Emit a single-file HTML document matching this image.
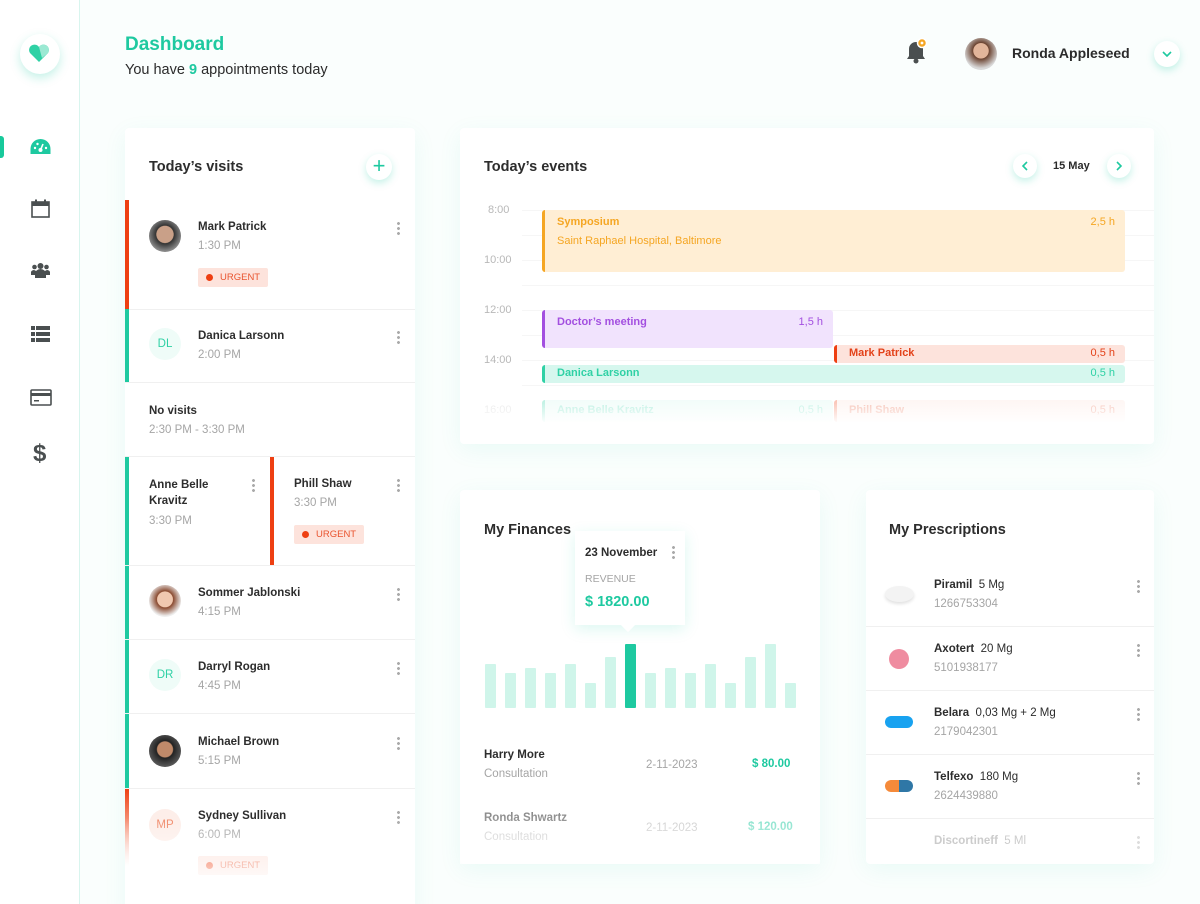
<!DOCTYPE html><html><head><meta charset="utf-8"><style>
*{margin:0;padding:0;box-sizing:border-box}
html,body{width:1200px;height:904px;overflow:hidden}
body{background:#fafefd;font-family:"Liberation Sans",sans-serif;color:#2b2b2b;position:relative}
.a{position:absolute}
.side{left:0;top:0;width:80px;height:904px;background:#fff;border-right:1px solid #d8f5ee}
.card{background:#fff;border-radius:4px;box-shadow:0 6px 24px rgba(20,200,160,.07)}
.t{font-size:14.5px;font-weight:bold;color:#2d2d2d}
.n{font-size:11.5px;font-weight:bold;color:#2d2d2d}
.s{font-size:11.5px;color:#a5a5a5}
.dots{width:3px;height:15px;background:radial-gradient(circle,#aaa 1.3px,transparent 1.6px) 0 0/3px 5px}
.urg{background:#fde3dc;color:#e9542f;font-size:9.5px;height:19px;line-height:19px;padding:0 8px 0 22px;border-radius:2px}
.urg:before{content:"";position:absolute;left:8px;top:6px;width:7px;height:7px;border-radius:50%;background:#ee3f12}
.av{width:32px;height:32px;border-radius:50%;font-size:11.5px;text-align:center;line-height:32px}
.line{height:1px;background:#f0f0f0}
.ev{border-radius:3px;font-size:11px;font-weight:bold;padding:6px 10px 0 12px}
.ev i{position:absolute;right:10px;top:6px;font-style:normal;font-weight:normal}
.hr{font-size:11px;color:#b8b8b8}
.bar{width:11px;background:#cff5ea;bottom:156px;border-radius:1px}
</style></head><body>
<div class="a side">
 <div class="a" style="left:20px;top:34px;width:40px;height:40px;border-radius:50%;background:#fff;box-shadow:0 4px 10px rgba(20,200,160,.25)"></div>
 <svg class="a" style="left:28px;top:43px" width="22" height="20" viewBox="0 0 22 20"><path d="M11 19L2 10A5 5 0 0 1 11 4A5 5 0 0 1 20 10Z" fill="#2fd1a5"/><path d="M11 4A5 5 0 0 1 20 10L14 15Z" fill="#9be9d3"/></svg>
 <div class="a" style="left:0;top:136px;width:4px;height:22px;background:#18c99b;border-radius:0 3px 3px 0"></div>
 <svg class="a" style="left:30px;top:138px" width="21" height="17" viewBox="0 0 21 17"><path d="M10.5 1A10 10 0 0 0 0.5 11V16H20.5V11A10 10 0 0 0 10.5 1Z" fill="#1ec9a0"/><circle cx="10.5" cy="12" r="2" fill="#fff"/><path d="M10.5 12L13 6" stroke="#fff" stroke-width="1.6"/><circle cx="5" cy="10" r="1.2" fill="#fff"/><circle cx="16" cy="10" r="1.2" fill="#fff"/><circle cx="7.5" cy="6" r="1.2" fill="#fff"/></svg>
 <svg class="a" style="left:31px;top:199px" width="19" height="19" viewBox="0 0 19 19"><rect x="1" y="3" width="17" height="15" fill="none" stroke="#4a4f50" stroke-width="1.6"/><rect x="1" y="3" width="17" height="4" fill="#4a4f50"/><rect x="4" y="0.5" width="2" height="4" fill="#4a4f50"/><rect x="13" y="0.5" width="2" height="4" fill="#4a4f50"/></svg>
 <svg class="a" style="left:31px;top:262px" width="19" height="17" viewBox="0 0 19 17"><circle cx="9.5" cy="4" r="3" fill="#4a4f50"/><circle cx="3.5" cy="5" r="2.3" fill="#4a4f50"/><circle cx="15.5" cy="5" r="2.3" fill="#4a4f50"/><path d="M4 16V12A5.5 5 0 0 1 15 12V16Z M0 13V10A3 3 0 0 1 5 9V13Z M14 9A3 3 0 0 1 19 10V13H14Z" fill="#4a4f50"/></svg>
 <svg class="a" style="left:31px;top:326px" width="19" height="16" viewBox="0 0 19 16"><g fill="#4a4f50"><rect x="0" y="0" width="4" height="4"/><rect x="5" y="0" width="14" height="4"/><rect x="0" y="6" width="4" height="4"/><rect x="5" y="6" width="14" height="4"/><rect x="0" y="12" width="4" height="4"/><rect x="5" y="12" width="14" height="4"/></g></svg>
 <svg class="a" style="left:30px;top:389px" width="22" height="17" viewBox="0 0 22 17"><rect x="1" y="1" width="20" height="15" rx="1" fill="none" stroke="#4a4f50" stroke-width="1.6"/><rect x="1" y="4" width="20" height="3" fill="#4a4f50"/><rect x="4" y="11" width="5" height="1.5" fill="#4a4f50"/></svg>
 <div class="a" style="left:33px;top:440px;font-size:24px;font-weight:bold;color:#4a4f50">$</div>
</div>

<div class="a" style="left:125px;top:34px;font-size:19px;font-weight:bold;color:#1ec9a0">Dashboard</div>
<div class="a" style="left:125px;top:62px;font-size:14.5px;color:#2b2b2b">You have <b style="color:#1ec9a0">9</b> appointments today</div>
<svg class="a" style="left:905px;top:37px" width="24" height="28" viewBox="0 0 24 28"><path d="M11 5A7 7 0 0 0 4 12V19L2 22H20L18 19V12A7 7 0 0 0 11 5Z" fill="#4a4f50"/><circle cx="11" cy="24" r="2.5" fill="#4a4f50"/><circle cx="17" cy="6" r="4.5" fill="#f5a623" stroke="#fff" stroke-width="1.5"/><circle cx="17" cy="6" r="1.4" fill="#fff"/></svg>
<div class="a" style="left:965px;top:38px;width:32px;height:32px;border-radius:50%;background:radial-gradient(circle at 50% 40%,#e2b59a 30%,#6b4330 32%,#d9d9d9 70%)"></div>
<div class="a" style="left:1012px;top:45px;font-size:14px;font-weight:bold">Ronda Appleseed</div>
<div class="a" style="left:1154px;top:41px;width:26px;height:26px;border-radius:50%;background:#fff;box-shadow:0 3px 8px rgba(20,200,160,.25)"><svg style="position:absolute;left:8px;top:10px" width="10" height="6"><path d="M1 1L5 5L9 1" fill="none" stroke="#1ec9a0" stroke-width="1.6"/></svg></div>

<!-- visits -->
<div class="a card" style="left:125px;top:128px;width:290px;height:790px">
 <div class="a t" style="left:24px;top:31px">Today’s visits</div>
 <div class="a" style="left:241px;top:26px;width:26px;height:26px;border-radius:50%;background:#fff;box-shadow:0 3px 8px rgba(20,200,160,.25);color:#1ec9a0;font-size:22px;text-align:center;line-height:24px">+</div>
 <div class="a" style="left:0;top:72px;width:4px;height:109px;background:#ee3f12"></div>
 <div class="a av" style="left:24px;top:92px;background:radial-gradient(circle at 50% 45%,#c9a088 35%,#333 38%,#888 70%)"></div>
 <div class="a n" style="left:73px;top:93px">Mark Patrick</div><div class="a s" style="left:73px;top:112px">1:30 PM</div>
 <div class="a urg" style="left:73px;top:140px">URGENT</div>
 <div class="a dots" style="left:272px;top:93px"></div>
 <div class="a line" style="left:0;top:181px;width:290px"></div>
 <div class="a" style="left:0;top:181px;width:4px;height:74px;background:#1ec9a0"></div>
 <div class="a av" style="left:24px;top:200px;background:#effcf8;color:#2fd1a5">DL</div>
 <div class="a n" style="left:73px;top:202px">Danica Larsonn</div><div class="a s" style="left:73px;top:221px">2:00 PM</div>
 <div class="a dots" style="left:272px;top:202px"></div>
 <div class="a line" style="left:0;top:254px;width:290px"></div>
 <div class="a n" style="left:24px;top:277px">No visits</div><div class="a s" style="left:24px;top:296px">2:30 PM - 3:30 PM</div>
 <div class="a line" style="left:0;top:328px;width:290px"></div>
 <div class="a" style="left:0;top:329px;width:4px;height:109px;background:#1ec9a0"></div>
 <div class="a n" style="left:24px;top:349px;line-height:16px">Anne Belle<br>Kravitz</div><div class="a s" style="left:24px;top:387px">3:30 PM</div>
 <div class="a dots" style="left:127px;top:350px"></div>
 <div class="a" style="left:145px;top:329px;width:4px;height:109px;background:#ee3f12"></div>
 <div class="a n" style="left:169px;top:350px">Phill Shaw</div><div class="a s" style="left:169px;top:369px">3:30 PM</div>
 <div class="a urg" style="left:169px;top:397px">URGENT</div>
 <div class="a dots" style="left:272px;top:350px"></div>
 <div class="a line" style="left:0;top:437px;width:290px"></div>
 <div class="a" style="left:0;top:438px;width:4px;height:350px;background:linear-gradient(#1ec9a0 0,#1ec9a0 222px,#ee3f12 222px,rgba(238,63,18,0) 300px)"></div>
 <div class="a av" style="left:24px;top:457px;background:radial-gradient(circle at 50% 45%,#f0c8b0 32%,#8a4a30 35%,#eee 70%)"></div>
 <div class="a n" style="left:73px;top:459px">Sommer Jablonski</div><div class="a s" style="left:73px;top:478px">4:15 PM</div>
 <div class="a dots" style="left:272px;top:459px"></div>
 <div class="a line" style="left:0;top:511px;width:290px"></div>
 <div class="a av" style="left:24px;top:531px;background:#effcf8;color:#2fd1a5">DR</div>
 <div class="a n" style="left:73px;top:533px">Darryl Rogan</div><div class="a s" style="left:73px;top:552px">4:45 PM</div>
 <div class="a dots" style="left:272px;top:533px"></div>
 <div class="a line" style="left:0;top:585px;width:290px"></div>
 <div class="a av" style="left:24px;top:607px;background:radial-gradient(circle at 50% 45%,#c08a6a 32%,#222 36%,#555 70%)"></div>
 <div class="a n" style="left:73px;top:608px">Michael Brown</div><div class="a s" style="left:73px;top:627px">5:15 PM</div>
 <div class="a dots" style="left:272px;top:608px"></div>
 <div class="a line" style="left:0;top:660px;width:290px"></div>
 <div class="a av" style="left:24px;top:681px;background:#fdeee9;color:#f08a6a">MP</div>
 <div class="a n" style="left:73px;top:682px">Sydney Sullivan</div><div class="a s" style="left:73px;top:701px">6:00 PM</div>
 <div class="a urg" style="left:73px;top:728px">URGENT</div>
 <div class="a dots" style="left:272px;top:682px"></div>
 <div class="a" style="left:0;top:690px;width:290px;height:100px;background:linear-gradient(rgba(255,255,255,0),#fff 75%)"></div>
</div>

<!-- events -->
<div class="a card" style="left:460px;top:128px;width:694px;height:316px">
 <div class="a t" style="left:24px;top:31px">Today’s events</div>
 <div class="a" style="left:553px;top:26px;width:24px;height:24px;border-radius:50%;box-shadow:0 3px 8px rgba(20,200,160,.25)"><svg style="position:absolute;left:8px;top:7px" width="7" height="10"><path d="M6 1L2 5L6 9" fill="none" stroke="#1ec9a0" stroke-width="1.6"/></svg></div>
 <div class="a" style="left:593px;top:32px;font-size:11px;font-weight:bold">15 May</div>
 <div class="a" style="left:647px;top:26px;width:24px;height:24px;border-radius:50%;box-shadow:0 3px 8px rgba(20,200,160,.25)"><svg style="position:absolute;left:9px;top:7px" width="7" height="10"><path d="M1 1L5 5L1 9" fill="none" stroke="#1ec9a0" stroke-width="1.6"/></svg></div>
 <div class="a hr" style="left:28px;top:76px">8:00</div><div class="a hr" style="left:24px;top:126px">10:00</div><div class="a hr" style="left:24px;top:176px">12:00</div><div class="a hr" style="left:24px;top:226px">14:00</div><div class="a hr" style="left:24px;top:276px">16:00</div>
 <div class="a line" style="left:62px;top:82px;width:632px;background:#f6f6f6"></div><div class="a line" style="left:62px;top:107px;width:632px;background:#f6f6f6"></div><div class="a line" style="left:62px;top:132px;width:632px;background:#f6f6f6"></div><div class="a line" style="left:62px;top:157px;width:632px;background:#f6f6f6"></div><div class="a line" style="left:62px;top:182px;width:632px;background:#f6f6f6"></div><div class="a line" style="left:62px;top:207px;width:632px;background:#f6f6f6"></div><div class="a line" style="left:62px;top:232px;width:632px;background:#f6f6f6"></div><div class="a line" style="left:62px;top:257px;width:632px;background:#f6f6f6"></div>
 <div class="a ev" style="left:82px;top:82px;width:583px;height:62px;background:#ffeed4;border-left:3px solid #f5a623;color:#f5a623">Symposium<i>2,5 h</i><div style="font-weight:normal;margin-top:7px">Saint Raphael Hospital, Baltimore</div></div>
 <div class="a ev" style="left:82px;top:182px;width:291px;height:38px;background:#f1e3fd;border-left:3px solid #a34fe0;color:#a34fe0">Doctor’s meeting<i>1,5 h</i></div>
 <div class="a ev" style="left:374px;top:217px;width:291px;height:18px;padding-top:2px;background:#fde3dc;border-left:3px solid #ee3f12;color:#e3421a">Mark Patrick<i style="top:2px">0,5 h</i></div>
 <div class="a ev" style="left:82px;top:237px;width:583px;height:18px;padding-top:2px;background:#d6f7ee;border-left:3px solid #2fd1a5;color:#2fd1a5">Danica Larsonn<i style="top:2px">0,5 h</i></div>
 <div class="a ev" style="left:82px;top:272px;width:291px;height:22px;padding-top:4px;background:#d6f7ee;border-left:3px solid #2fd1a5;color:#2fd1a5">Anne Belle Kravitz<i style="top:4px">0,5 h</i></div>
 <div class="a ev" style="left:374px;top:272px;width:291px;height:22px;padding-top:4px;background:#fde3dc;border-left:3px solid #ee3f12;color:#e3421a">Phill Shaw<i style="top:4px">0,5 h</i></div>
 <div class="a" style="left:0;top:262px;width:694px;height:40px;background:linear-gradient(rgba(255,255,255,.55),#fff 85%)"></div>
</div>

<!-- finances -->
<div class="a card" style="left:460px;top:490px;width:360px;height:374px">
 <div class="a t" style="left:24px;top:32px">My Finances</div>
 <div class="a bar" style="left:25px;height:44px"></div><div class="a bar" style="left:45px;height:35px"></div><div class="a bar" style="left:65px;height:40px"></div><div class="a bar" style="left:85px;height:35px"></div><div class="a bar" style="left:105px;height:44px"></div><div class="a bar" style="left:125px;height:25px"></div><div class="a bar" style="left:145px;height:51px"></div><div class="a bar" style="left:165px;height:64px;background:#1ec9a0"></div><div class="a bar" style="left:185px;height:35px"></div><div class="a bar" style="left:205px;height:40px"></div><div class="a bar" style="left:225px;height:35px"></div><div class="a bar" style="left:245px;height:44px"></div><div class="a bar" style="left:265px;height:25px"></div><div class="a bar" style="left:285px;height:51px"></div><div class="a bar" style="left:305px;height:64px"></div><div class="a bar" style="left:325px;height:25px"></div>
 <div class="a" style="left:115px;top:41px;width:110px;height:94px;background:#fff;box-shadow:0 4px 14px rgba(20,200,160,.15)">
  <div class="a n" style="left:10px;top:16px">23 November</div><div class="a dots" style="left:97px;top:14px"></div>
  <div class="a" style="left:10px;top:42px;font-size:10.5px;color:#a5a5a5">REVENUE</div>
  <div class="a" style="left:10px;top:63px;font-size:14.5px;font-weight:bold;color:#1ec9a0">$ 1820.00</div>
  <div class="a" style="left:48px;top:89px;width:10px;height:10px;background:#fff;transform:rotate(45deg)"></div>
 </div>
 <div class="a n" style="left:24px;top:259px">Harry More</div><div class="a s" style="left:24px;top:278px">Consultation</div>
 <div class="a s" style="left:186px;top:269px">2-11-2023</div><div class="a n" style="left:292px;top:268px;color:#1ec9a0">$ 80.00</div>
 <div class="a n" style="left:24px;top:322px">Ronda Shwartz</div><div class="a s" style="left:24px;top:341px">Consultation</div>
 <div class="a s" style="left:186px;top:332px">2-11-2023</div><div class="a n" style="left:288px;top:331px;color:#1ec9a0">$ 120.00</div>
 <div class="a" style="left:0;top:305px;width:360px;height:69px;background:linear-gradient(rgba(255,255,255,.3),rgba(255,255,255,.85))"></div>
</div>

<!-- prescriptions -->
<div class="a card" style="left:866px;top:490px;width:288px;height:374px">
 <div class="a t" style="left:23px;top:32px">My Prescriptions</div>
 <div class="a" style="left:19px;top:96px;width:29px;height:16px;border-radius:50%;background:#f3f3f3;box-shadow:0 2px 3px rgba(0,0,0,.12)"></div>
 <div class="a n" style="left:68px;top:89px">Piramil <span style="font-weight:normal">&nbsp;5 Mg</span></div><div class="a s" style="left:68px;top:108px">1266753304</div><div class="a dots" style="left:271px;top:89px"></div>
 <div class="a line" style="left:0;top:136px;width:288px"></div>
 <div class="a" style="left:23px;top:159px;width:20px;height:20px;border-radius:50%;background:#ef8ca0"></div>
 <div class="a n" style="left:68px;top:153px">Axotert <span style="font-weight:normal">&nbsp;20 Mg</span></div><div class="a s" style="left:68px;top:172px">5101938177</div><div class="a dots" style="left:271px;top:153px"></div>
 <div class="a line" style="left:0;top:200px;width:288px"></div>
 <div class="a" style="left:19px;top:226px;width:28px;height:12px;border-radius:6px;background:#18a2f0"></div>
 <div class="a n" style="left:68px;top:217px">Belara <span style="font-weight:normal">&nbsp;0,03 Mg + 2 Mg</span></div><div class="a s" style="left:68px;top:236px">2179042301</div><div class="a dots" style="left:271px;top:217px"></div>
 <div class="a line" style="left:0;top:264px;width:288px"></div>
 <div class="a" style="left:19px;top:290px;width:28px;height:12px;border-radius:6px;background:linear-gradient(90deg,#f58a3a 50%,#2f77a6 50%)"></div>
 <div class="a n" style="left:68px;top:281px">Telfexo <span style="font-weight:normal">&nbsp;180 Mg</span></div><div class="a s" style="left:68px;top:300px">2624439880</div><div class="a dots" style="left:271px;top:281px"></div>
 <div class="a line" style="left:0;top:328px;width:288px"></div>
 <div class="a n" style="left:68px;top:345px;color:#ccc">Discortineff <span style="font-weight:normal">&nbsp;5 Ml</span></div><div class="a dots" style="left:271px;top:345px;opacity:.4"></div>
</div>
</body></html>
